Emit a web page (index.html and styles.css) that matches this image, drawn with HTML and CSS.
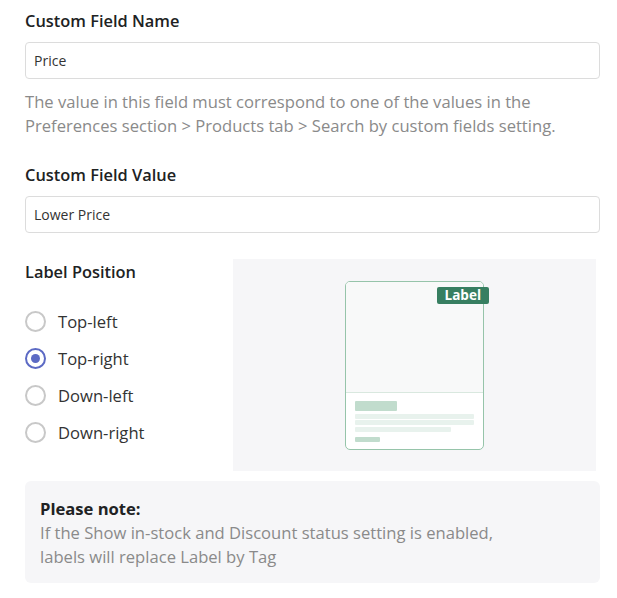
FILE: index.html
```html
<!DOCTYPE html>
<html lang="en">
<head>
  <meta charset="UTF-8">
  <meta name="viewport" content="width=device-width, initial-scale=1.0">
  <title>Custom Field Label</title>
  <link rel="stylesheet" href="styles.css">
</head>
<body>
  <div class="settings">
    <!-- Custom field name -->
    <div class="field">
      <label class="field-title" for="fieldName">Custom Field Name</label>
      <input type="text" id="fieldName" class="text-input" value="Price">
      <p class="help-text">The value in this field must correspond to one of the values in the Preferences section &gt; Products tab &gt; Search by custom fields setting.</p>
    </div>

    <!-- Custom field value -->
    <div class="field">
      <label class="field-title" for="fieldValue">Custom Field Value</label>
      <input type="text" id="fieldValue" class="text-input" value="Lower Price">
    </div>

    <!-- Label position -->
    <div class="position-row">
      <div class="position-options">
        <div class="field-title">Label Position</div>
        <label class="radio"><span class="radio-dot"></span>Top-left</label>
        <label class="radio checked"><span class="radio-dot"></span>Top-right</label>
        <label class="radio"><span class="radio-dot"></span>Down-left</label>
        <label class="radio"><span class="radio-dot"></span>Down-right</label>
      </div>
      <div class="preview">
        <div class="product-card">
          <div class="card-image"></div>
          <div class="card-body">
            <div class="bar bar-title"></div>
            <div class="bar bar-line"></div>
            <div class="bar bar-line"></div>
            <div class="bar bar-line short"></div>
            <div class="bar bar-price"></div>
          </div>
          <span class="badge">Label</span>
        </div>
      </div>
    </div>

    <div class="note">
      <strong>Please note:</strong>
      <p>If the Show in-stock and Discount status setting is enabled,<br>labels will replace Label by Tag</p>
    </div>
  </div>
</body>
</html>
```

FILE: styles.css
```css
:root {
  --text-color: #202223;
  --muted-color: #8a8a8a;
  --border-color: #dcdcdc;
  --panel-bg: #f6f6f8;
  --accent: #5c6ac4;
  --green: #377f61;
}

body {
  margin: 0;
  font-family: 'Open Sans', 'Noto Sans', sans-serif;
  color: var(--text-color);
  background: #fff;
}

.settings {
  width: 575px;
  padding: 9px 0 0 25px;
}

.field {
  display: flex;
  flex-direction: column;
  margin-bottom: 14px;
}

.field-title {
  font-size: 16.4px;
  font-weight: 600;
  line-height: 24px;
  margin-bottom: 9px;
}

.text-input {
  height: 37px;
  box-sizing: border-box;
  padding: 0 8px;
  border: 1px solid var(--border-color);
  border-radius: 4px;
  font-family: inherit;
  font-size: 14px;
  color: #333;
  outline: none;
}

.help-text {
  margin: 11px 0 11px;
  font-size: 16.6px;
  line-height: 24px;
  color: var(--muted-color);
}

.position-row {
  display: flex;
  margin-top: 26px;
  margin-right: 4px;
}

.position-options {
  width: 208px;
  display: flex;
  flex-direction: column;
  padding-top: 1px;
}

.position-options .field-title {
  margin-bottom: 19px;
}

.radio {
  display: flex;
  align-items: center;
  height: 37px;
  font-size: 16.6px;
  color: #333;
  cursor: pointer;
}

.radio-dot {
  width: 21px;
  height: 21px;
  box-sizing: border-box;
  border: 2px solid #c8c8c8;
  border-radius: 50%;
  margin-right: 12px;
  display: flex;
  align-items: center;
  justify-content: center;
}

.radio.checked .radio-dot {
  border-color: var(--accent);
}

.radio.checked .radio-dot::after {
  content: "";
  width: 9px;
  height: 9px;
  border-radius: 50%;
  background: var(--accent);
}

.preview {
  flex: 1;
  height: 212px;
  background: var(--panel-bg);
  display: flex;
  align-items: center;
  justify-content: center;
}

.product-card {
  position: relative;
  width: 139px;
  height: 169px;
  box-sizing: border-box;
  border: 1.5px solid #96c4aa;
  border-radius: 5px;
  background: #fff;
  display: flex;
  flex-direction: column;
}

.card-image {
  height: 110px;
  background: #f8f9f9;
  border-bottom: 1px solid #d9e8df;
  border-radius: 4px 4px 0 0;
}

.card-body {
  padding: 8px 9px 0;
  display: flex;
  flex-direction: column;
}

.bar {
  border-radius: 1px;
  background: #e8f2ed;
}

.bar-title {
  width: 42px;
  height: 10px;
  background: #c1dccd;
  margin-bottom: 3px;
}

.bar-line {
  width: 119px;
  height: 5px;
  margin-bottom: 1.5px;
}

.bar-line.short {
  width: 96px;
}

.bar-price {
  width: 25px;
  height: 5px;
  margin-top: 4px;
  background: #c1dccd;
}

.badge {
  position: absolute;
  top: 5px;
  right: -6px;
  background: var(--green);
  color: #fff;
  font-size: 13.5px;
  font-weight: 700;
  line-height: 17px;
  padding: 0 8px;
  border-radius: 2px;
}

.note {
  margin-top: 10px;
  padding: 16px 15px 15px;
  background: var(--panel-bg);
  border-radius: 6px;
  height: 102px;
  box-sizing: border-box;
  font-size: 16.6px;
  line-height: 24px;
}

.note strong {
  font-weight: 700;
}

.note p {
  margin: 0;
  color: var(--muted-color);
}
```
